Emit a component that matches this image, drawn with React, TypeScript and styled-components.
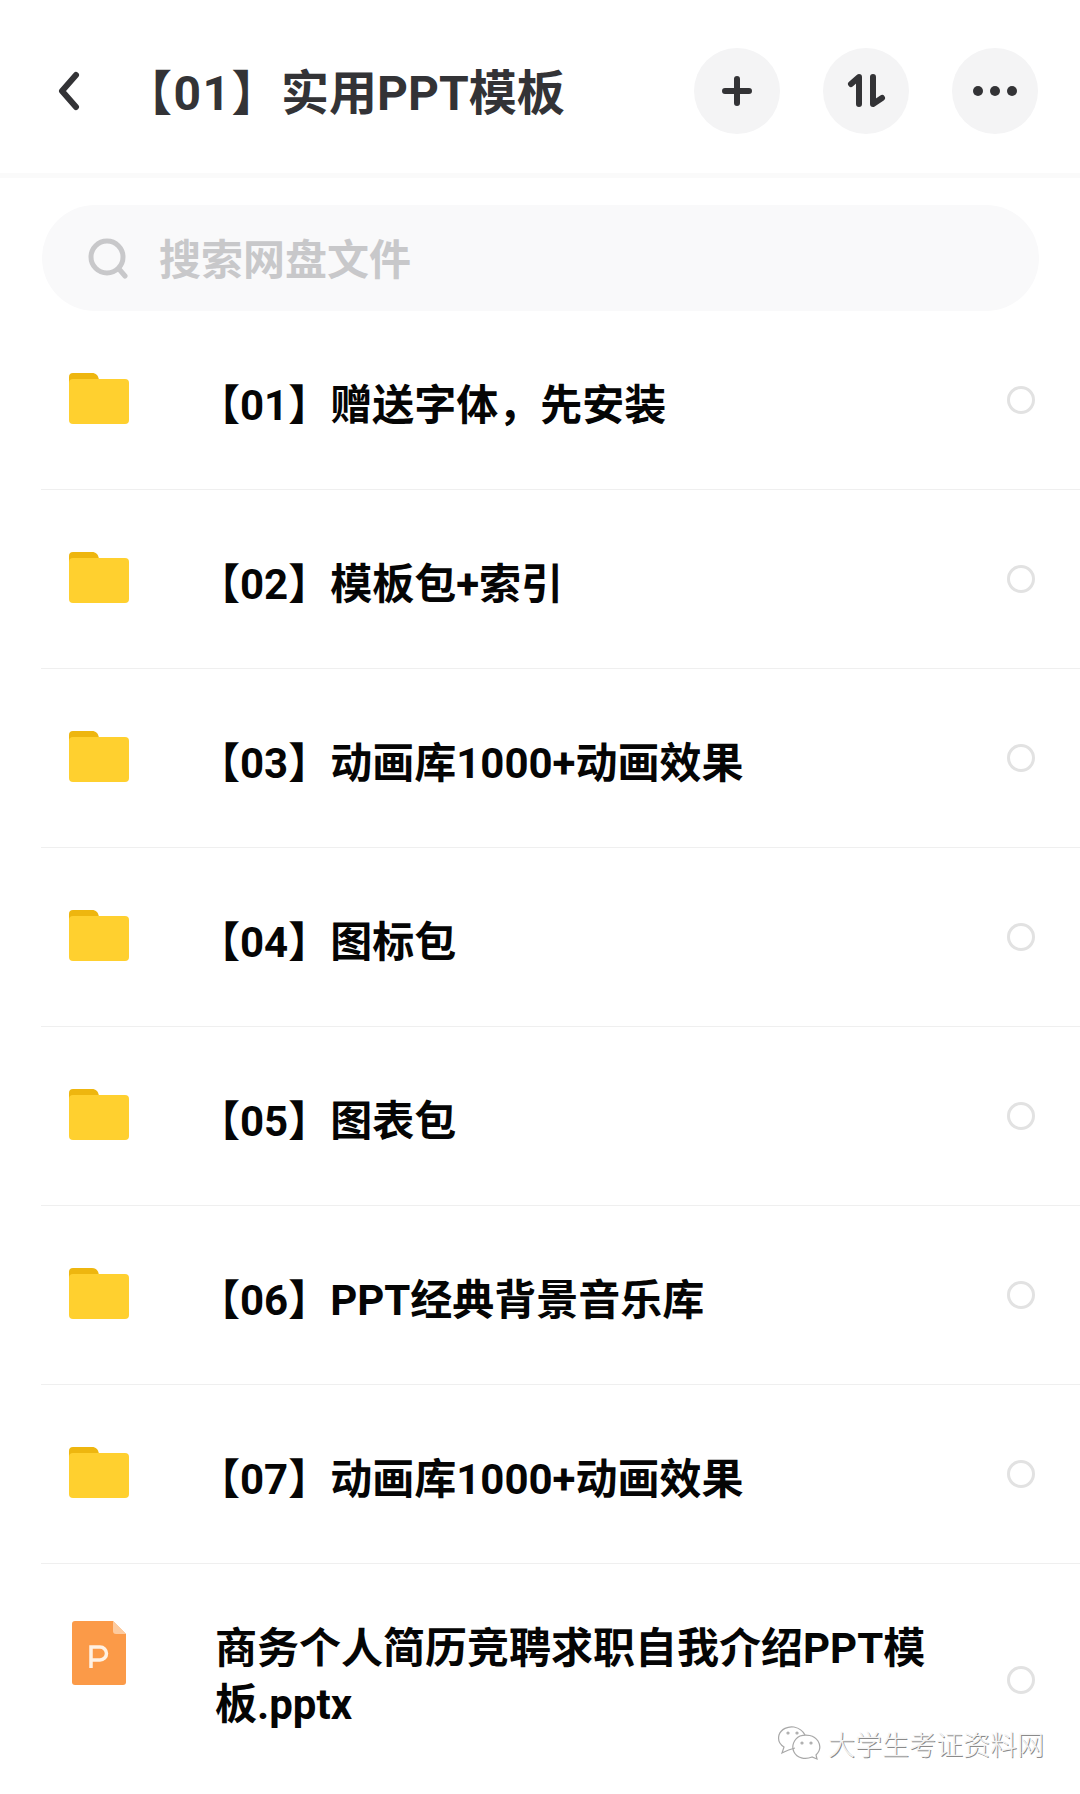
import React from 'react';
import styled, { createGlobalStyle } from 'styled-components';

type EntryType = {
  name: string
  kind: 'folder' | 'ppt'
};

const entries: EntryType[] = [
  { name: '【01】赠送字体，先安装', kind: 'folder' },
  { name: '【02】模板包+索引', kind: 'folder' },
  { name: '【03】动画库1000+动画效果', kind: 'folder' },
  { name: '【04】图标包', kind: 'folder' },
  { name: '【05】图表包', kind: 'folder' },
  { name: '【06】PPT经典背景音乐库', kind: 'folder' },
  { name: '【07】动画库1000+动画效果', kind: 'folder' },
  { name: '商务个人简历竞聘求职自我介绍PPT模板.pptx', kind: 'ppt' }
];

const FolderIcon = () => (
  <svg width="60" height="52" viewBox="0 0 60 52">
    <path d="M0 5a4 4 0 0 1 4-4h19c4 0 6 2 7 7v8H0z" fill="#eeb60f" />
    <rect x="0" y="7" width="60" height="45" rx="4" fill="#ffd02f" />
  </svg>
);

const PptIcon = () => (
  <svg width="54" height="64" viewBox="0 0 54 64">
    <path d="M3 0h38l13 13v48a3 3 0 0 1-3 3H3a3 3 0 0 1-3-3V3a3 3 0 0 1 3-3z" fill="#fb9a48" />
    <path d="M41 0l13 13H44a3 3 0 0 1-3-3z" fill="#fdcb9f" />
    <path d="M19 47V26h9a6.500 6.500 0 0 1 0 13H19" fill="none" stroke="#fff1e3" strokeWidth="3.500" />
  </svg>
);

const App = () => {
  return (
    <Page>
      <GlobalStyle />
      <Header>
        <BackIcon width="22" height="40" viewBox="0 0 22 40">
          <path d="M18 4L4 20l14 16" />
        </BackIcon>
        <Title><TitlePrefix>【01】</TitlePrefix>实用PPT模板</Title>
        <Actions>
          <ActionButton>
            <ActionIcon viewBox="0 0 40 40">
              <path d="M20 8v24M8 20h24" />
            </ActionIcon>
          </ActionButton>
          <ActionButton>
            <ActionIcon viewBox="0 0 40 40">
              <path d="M13 33V6l-8 7M27 6v27l9-6" />
            </ActionIcon>
          </ActionButton>
          <ActionButton>
            <ActionIcon viewBox="0 0 40 40">
              <circle className="dot" cx="3" cy="20" r="5" />
              <circle className="dot" cx="20" cy="20" r="5" />
              <circle className="dot" cx="37" cy="20" r="5" />
            </ActionIcon>
          </ActionButton>
        </Actions>
      </Header>
      <SearchBar>
        <svg width="40" height="42" viewBox="0 0 40 42" fill="none" stroke="#c8c8ca" strokeWidth="5" strokeLinecap="round">
          <circle cx="19" cy="20" r="16" />
          <path d="M31 32l6 7" />
        </svg>
        <SearchText>搜索网盘文件</SearchText>
      </SearchBar>
      <List>
        {entries.map((entry) => (
          <Row key={entry.name} $tall={entry.kind === 'ppt'}>
            <IconCell $tall={entry.kind === 'ppt'}>
              {entry.kind === 'folder' ? <FolderIcon /> : <PptIcon />}
            </IconCell>
            <Name $bracketed={entry.name.startsWith('【')}>{entry.name}</Name>
            <Radio />
          </Row>
        ))}
      </List>
      <Watermark>
        <svg width="46" height="36" viewBox="0 0 46 36" fill="none" stroke="#a8a8a8" strokeWidth="1.200">
          <path d="M18 22C10 24 7 26 5 27l2-6C2 18 1 13 2 9c2-6 9-9 15-8 5 1 9 4 11 8" />
          <path d="M40 33l-5-2c-7 3-15 1-18-5-3-6 0-13 6-16 6-2 14-1 18 5 3 5 2 10-2 14z" />
          <circle cx="11" cy="7" r="1" />
          <circle cx="20" cy="7" r="1" />
          <circle cx="25" cy="17" r="1" />
          <circle cx="34" cy="17" r="1" />
        </svg>
        <WatermarkText>大学生考证资料网</WatermarkText>
      </Watermark>
    </Page>
  );
};

export default App;

const GlobalStyle = createGlobalStyle`
  body {
    margin: 0;
    background: #fff;
    font-family: Roboto, "Noto Sans CJK SC", sans-serif;
  }
`;

const Page = styled.div`
  position: relative;
  width: 1080px;
  height: 1794px;
  overflow: hidden;
  background: #fff;
`;

const Header = styled.div`
  display: flex;
  align-items: center;
  height: 178px;
  padding: 8px 42px 0 58px;
  box-sizing: border-box;
  border-bottom: 5px solid #fafafa;
  background: #fff;
`;

const BackIcon = styled.svg`
  flex: none;
  fill: none;
  stroke: #333336;
  stroke-width: 6;
  stroke-linecap: round;
  stroke-linejoin: round;
`;

const Title = styled.div`
  flex: 1;
  margin: -4px 0 0 44px;
  font-size: 48px;
  font-weight: 700;
  color: #333336;
  white-space: nowrap;
`;

const TitlePrefix = styled.span`
  letter-spacing: 1.5px;
`;

const Actions = styled.div`
  display: flex;
  gap: 43px;
`;

const ActionButton = styled.div`
  display: flex;
  align-items: center;
  justify-content: center;
  width: 86px;
  height: 86px;
  border-radius: 50%;
  background: #f4f4f5;
`;

const ActionIcon = styled.svg`
  width: 40px;
  height: 40px;
  overflow: visible;
  fill: none;
  stroke: #333336;
  stroke-width: 6;
  stroke-linecap: round;
  stroke-linejoin: round;

  .dot {
    fill: #333336;
    stroke: none;
  }
`;

const SearchBar = styled.div`
  display: flex;
  align-items: center;
  gap: 31px;
  height: 106px;
  margin: 27px 41px 0 42px;
  padding-left: 46px;
  border-radius: 53px;
  background: #f9f9fa;
`;

const SearchText = styled.div`
  margin-top: -4px;
  font-size: 42px;
  font-weight: 700;
  color: #c8c8ca;
`;

const List = styled.div`
  margin-left: 41px;
`;

const Row = styled.div<{ $tall: boolean }>`
  display: grid;
  grid-template-columns: 133px 1fr 28px;
  align-items: center;
  height: ${(props) => (props.$tall ? 231 : 179)}px;
  padding-right: 45px;
  box-sizing: border-box;
  border-bottom: ${(props) => (props.$tall ? 0 : 1)}px solid #efefef;
`;

const IconCell = styled.div<{ $tall: boolean }>`
  display: flex;
  align-items: flex-start;
  height: ${(props) => (props.$tall ? 113 : 52)}px;
  padding-left: ${(props) => (props.$tall ? 31 : 28)}px;
  margin-bottom: 4px;
`;

const Name = styled.div<{ $bracketed: boolean }>`
  margin-top: ${(props) => (props.$bracketed ? 12 : -6)}px;
  margin-left: ${(props) => (props.$bracketed ? 24 : 41)}px;
  padding-right: 50px;
  font-size: 42px;
  line-height: 56px;
  font-weight: 700;
  color: #050505;
`;

const Radio = styled.div`
  width: 28px;
  height: 28px;
  box-sizing: border-box;
  border: 3px solid #e2e2e2;
  border-radius: 50%;
`;

const Watermark = styled.div`
  position: absolute;
  right: 36px;
  bottom: 31px;
  display: flex;
  align-items: center;
  gap: 5px;
`;

const WatermarkText = styled.div`
  font-size: 27px;
  font-weight: 300;
  color: #f4f4f4;
  text-shadow: 1px 1px 0 #8a8a8a;
`;
